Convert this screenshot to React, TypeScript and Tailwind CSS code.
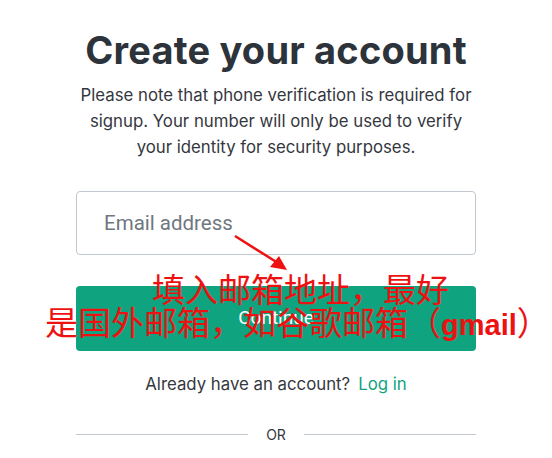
import React from "react";

const Arrow: React.FC = () => (
  <svg className="absolute left-[230px] top-[230px]" width="70" height="50" viewBox="0 0 70 50">
    <line x1="5" y1="6" x2="48" y2="33" stroke="#ee1111" strokeWidth="2.5" />
    <polygon points="57,40 40,37 49,26" fill="#ee1111" />
  </svg>
);

const App: React.FC = () => {
  return (
    <div className="relative min-h-screen bg-white font-['Inter','Noto_Sans',sans-serif] text-[#353740]">
      <div className="mx-auto flex w-[400px] flex-col items-center pt-[26px]">
        <h1 className="text-[38px] font-bold leading-[48px] tracking-[0.2px] text-[#2d333a]">Create your account</h1>
        <p className="mt-[8px] whitespace-nowrap text-center text-[16.8px] leading-[26px]">
          Please note that phone verification is required for
          <br />
          signup. Your number will only be used to verify
          <br />
          your identity for security purposes.
        </p>
        <div className="mt-[31px] flex h-[64px] w-full items-center rounded-[4px] border border-[#c2c8d0] px-[27px] font-['Roboto',sans-serif] text-[20.5px] text-[#6f7780]">
          Email address
        </div>
        <button className="mt-[31px] flex h-[65px] w-full items-center justify-center rounded-[4px] bg-[#10a37f] font-['Roboto',sans-serif] text-[19px] text-white">
          Continue
        </button>
        <div className="mt-[21px] text-[16.8px] leading-[24px]">
          Already have an account?<span className="ml-[8px] text-[#10a37f]">Log in</span>
        </div>
        <div className="mt-[28px] flex w-full items-center">
          <div className="h-px flex-1 bg-[#c2c8d0]" />
          <span className="px-[18px] text-[14px]">OR</span>
          <div className="h-px flex-1 bg-[#c2c8d0]" />
        </div>
      </div>

      <Arrow />
      <div className="absolute left-[45px] top-[272px] whitespace-nowrap font-['Noto_Sans_CJK_SC',sans-serif] text-[33px] leading-[33px] text-[#ee1111]">
        <div className="pl-[107px]">填入邮箱地址，最好</div>
        <div>
          是国外邮箱，如谷歌邮箱（<span className="font-['Liberation_Sans',sans-serif] text-[29px] font-bold">gmail</span>）
        </div>
      </div>
    </div>
  );
};

export default App;
